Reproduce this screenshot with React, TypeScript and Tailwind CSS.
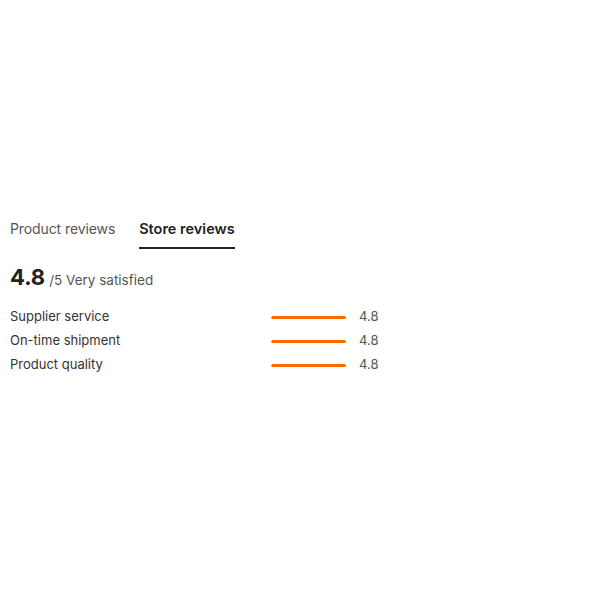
import { useState } from 'react'

export default function App() {
  const [tab, setTab] = useState('store')

  const scores = [
    { label: 'Supplier service', value: 4.8 },
    { label: 'On-time shipment', value: 4.8 },
    { label: 'Product quality', value: 4.8 },
  ]

  return (
    <div className="w-[600px] h-[600px] bg-white px-[10px] pt-[219px] font-['Inter',sans-serif] text-[#333]">
      {/* tabs */}
      <div className="flex gap-6">
        {[
          { value: 'product', label: 'Product reviews' },
          { value: 'store', label: 'Store reviews' },
        ].map((t) => (
          <button
            key={t.value}
            onClick={() => setTab(t.value)}
            className={`leading-5 pb-2 border-b-2 ${
              tab === t.value
                ? 'text-[14.5px] font-semibold text-[#222] border-[#222]'
                : 'text-[14px] text-[#555] border-transparent tracking-[-0.1px]'
            }`}
          >
            {t.label}
          </button>
        ))}
      </div>

      {/* overall */}
      <div className="mt-[14px] flex items-baseline gap-1">
        <span className="text-[22px] font-bold text-[#222] leading-7">4.8</span>
        <span className="text-[13.5px] text-[#555]">/5 Very satisfied</span>
      </div>

      {/* breakdown */}
      <div className="mt-[14px]">
        {scores.map((s) => (
          <div key={s.label} className="flex items-center h-6">
            <span className="w-[261px] text-[13px] text-[#333]">{s.label}</span>
            <div className="w-[78px] h-[3px] rounded-full overflow-hidden">
              <div
                className="h-full bg-[#ff6a00] rounded-full"
                style={{ width: `${(s.value / 5) * 100}%` }}
              />
            </div>
            <span className="ml-[10px] text-[13px] text-[#555]">{s.value}</span>
          </div>
        ))}
      </div>
    </div>
  )
}
